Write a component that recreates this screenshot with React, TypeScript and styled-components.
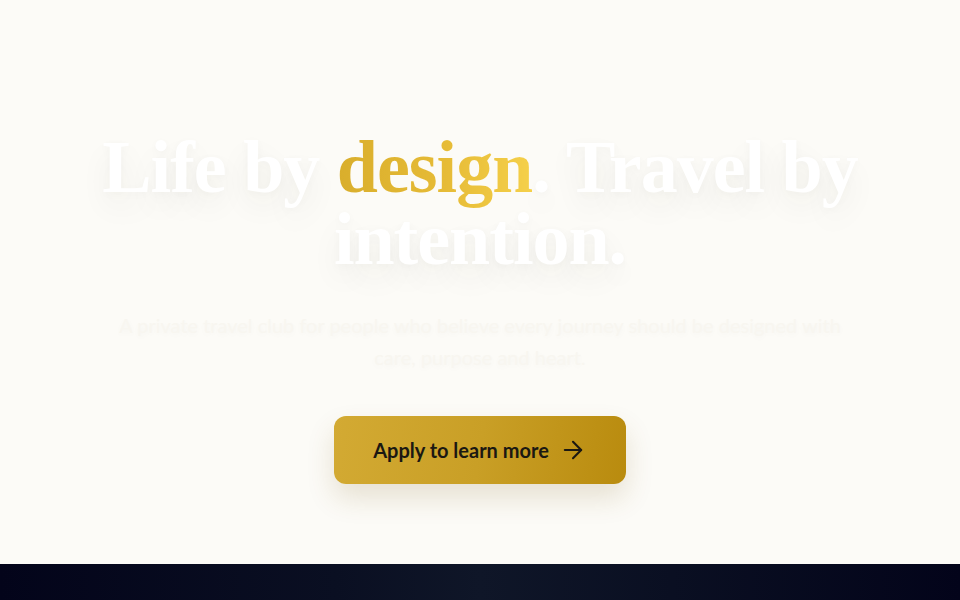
import React from "react";
import styled, { createGlobalStyle } from "styled-components";
import { ArrowRight } from "lucide-react";

const Global = createGlobalStyle`
  html, body { margin: 0; padding: 0; background: #fcfbf7; }
  body { font-family: Lato, "Liberation Sans", sans-serif; overflow: hidden; }
`;

const Page = styled.div`
  width: 960px;
  height: 600px;
  display: flex;
  flex-direction: column;
  background: #fcfbf7;
`;

const Hero = styled.section`
  height: 564px;
  box-sizing: border-box;
  padding-top: 131px;
  display: flex;
  flex-direction: column;
  align-items: center;
`;

const Title = styled.h1`
  margin: 0;
  width: 820px;
  text-align: center;
  font-family: "Liberation Serif", "DejaVu Serif", serif;
  font-weight: 700;
  font-size: 74px;
  line-height: 72px;
  letter-spacing: -1px;
  color: #ffffff;
  text-shadow: 0 14px 30px rgba(60, 50, 20, 0.07), 0 2px 8px rgba(60, 50, 20, 0.03);
`;

const Gold = styled.span`
  background: linear-gradient(90deg, #d9ae2c 0%, #e6bb36 55%, #f5d04a 100%);
  -webkit-background-clip: text;
  background-clip: text;
  color: transparent;
  text-shadow: none;
`;

const Subtitle = styled.p`
  margin: 34px 0 0;
  width: 760px;
  text-align: center;
  font-family: Lato, "Liberation Sans", sans-serif;
  font-size: 20px;
  line-height: 32px;
  color: #f8f6f0;
  text-shadow: 0 2px 6px rgba(60, 50, 20, 0.04);
`;

const CTA = styled.button`
  margin-top: 43px;
  width: 292px;
  height: 68px;
  border: none;
  border-radius: 12px;
  display: flex;
  align-items: center;
  justify-content: center;
  gap: 10px;
  background: linear-gradient(100deg, #d3aa33 0%, #c99f26 50%, #b98b0e 100%);
  box-shadow: 0 14px 28px rgba(120, 90, 20, 0.16);
  font-family: Lato, "Liberation Sans", sans-serif;
  font-weight: 700;
  font-size: 20px;
  color: #1b1812;
  cursor: pointer;
  padding: 0;
`;

const Band = styled.footer`
  flex: 1;
  background: linear-gradient(90deg, #03041a 0%, #0a0f22 35%, #0f1628 50%, #0a0f22 70%, #03041a 100%);
`;

export default function App() {
  return (
    <>
      <Global />
      <Page>
        <Hero>
          <Title>
            Life by <Gold>design</Gold>. Travel by intention.
          </Title>
          <Subtitle>
            A private travel club for people who believe every journey should be designed with
            care, purpose and heart.
          </Subtitle>
          <CTA>
            Apply to learn more
            <ArrowRight size={28} strokeWidth={1.8} />
          </CTA>
        </Hero>
        <Band />
      </Page>
    </>
  );
}
